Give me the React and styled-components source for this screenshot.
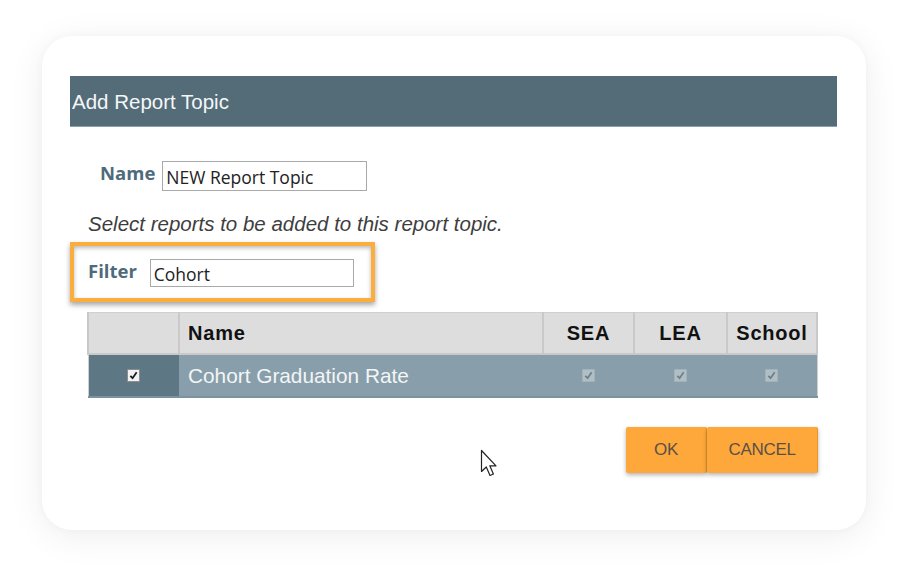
import React from 'react'
import styled, { createGlobalStyle } from 'styled-components'

const GlobalStyle = createGlobalStyle`
    body {
        margin: 0;
        background: #ffffff;
        font-family: "Liberation Sans", Arial, sans-serif;
    }
`

const Page = styled.div`
    width: 908px;
    height: 578px;
    box-sizing: border-box;
    padding: 36px 42px 0 42px;
`

const Card = styled.div`
    position: relative;
    width: 824px;
    height: 494px;
    box-sizing: border-box;
    padding: 40px 29px 0 28px;
    background: #fff;
    border-radius: 30px;
    box-shadow: 0 6px 36px rgba(0, 0, 0, 0.07), 0 0 8px rgba(0, 0, 0, 0.03);
`

const TitleBar = styled.div`
    height: 51px;
    display: flex;
    align-items: center;
    padding: 2px 0 0 2px;
    background: #546b78;
    border-bottom: 1px solid #8aa0ab;
    box-sizing: border-box;
    color: #f4f7f8;
    font-size: 20.5px;
    letter-spacing: 0;
`

const Row = styled.div`
    display: flex;
    align-items: flex-start;
    gap: ${p => p.$gap || 7}px;
    margin-top: ${p => p.$top || 0}px;
    padding-left: ${p => p.$left || 0}px;
`

const Label = styled.span`
    font-family: "Open Sans", "Noto Sans", sans-serif;
    font-weight: 700;
    font-size: 18.5px;
    line-height: 24px;
    color: #4f6b7b;
`

const TextInput = styled.input`
    width: ${p => p.$w}px;
    height: ${p => p.$h}px;
    box-sizing: border-box;
    border: 1px solid #a9a9a9;
    padding: 1px 3px 0;
    font-family: "Open Sans", "Noto Sans", sans-serif;
    font-size: 17.5px;
    color: #222;
    outline: none;
    background: #fff;
`

const Hint = styled.p`
    margin: 22px 0 0 18px;
    font-style: italic;
    font-size: 20.5px;
    line-height: 22px;
    color: #3e3e3e;
`

const FilterBox = styled.div`
    width: 305px;
    height: 60px;
    box-sizing: border-box;
    margin-top: 7px;
    border: 4px solid #fbad3d;
    box-shadow: 0 3px 5px rgba(0, 0, 0, 0.35), inset 0 2px 4px rgba(0, 0, 0, 0.28);
    padding: 13px 0 0 14px;
`

const Table = styled.table`
    margin: 10px 0 0 17px;
    width: 731px;
    border-collapse: collapse;
    border: 1px solid #d0d0d0;
    table-layout: fixed;
`

const Th = styled.th`
    width: ${p => p.$w}px;
    height: 40px;
    padding: 0 0 0 ${p => (p.$align === 'left' ? 8 : 0)}px;
    background: #dddddd;
    border: 2px solid #c9c9c9;
    border-top: 1px solid #d0d0d0;
    text-align: ${p => p.$align || 'center'};
    font-size: 20px;
    font-weight: 700;
    letter-spacing: 0.8px;
    color: #111;
`

const Td = styled.td`
    height: 41px;
    padding: 0 0 0 ${p => (p.$align === 'left' ? 9 : 0)}px;
    background: ${p => (p.$dark ? '#5d7785' : '#889fab')};
    border-bottom: 2px solid #7b93a0;
    text-align: ${p => p.$align || 'center'};
    font-size: 20.8px;
    color: #f3f5f6;
`

const Check = styled.span`
    display: inline-flex;
    align-items: center;
    justify-content: center;
    width: 13px;
    height: 13px;
    box-sizing: border-box;
    border: 1px solid ${p => (p.$disabled ? '#a3b3bb' : '#8e8e8e')};
    background: ${p => (p.$disabled ? '#b0bec5' : '#f2f2f2')};
    border-radius: 1px;
    vertical-align: middle;
    margin-top: -4px;
`

const Buttons = styled.div`
    display: flex;
    justify-content: flex-end;
    margin: 29px 19px 0 0;
`

const Button = styled.button`
    width: ${p => p.$w}px;
    height: 46px;
    border: none;
    border-right: 1px solid #e8962c;
    border-radius: 2px;
    background: #fea83b;
    box-shadow: 0 2px 4px rgba(0, 0, 0, 0.3);
    font-family: "Liberation Sans", Arial, sans-serif;
    font-size: 17px;
    color: #5a5048;
    text-transform: uppercase;
    padding: 0;
    letter-spacing: -0.3px;
`

const Cursor = styled.svg`
    position: absolute;
    left: 438px;
    top: 413px;
`

const CheckMark = ({ disabled }) => (
    <Check $disabled={disabled}>
        <svg width="9" height="9" viewBox="0 0 10 10">
            <path d="M1.5 5.5 L4 8 L8.5 1.5" fill="none" stroke={disabled ? '#6f7f88' : '#1a1a1a'} strokeWidth="2" />
        </svg>
    </Check>
)

const App = () => {
    return (
        <>
            <GlobalStyle />
            <Page>
                <Card>
                    <TitleBar>Add Report Topic</TitleBar>

                    <Row $top={34} $left={30}>
                        <Label>Name</Label>
                        <TextInput $w={205} $h={30} defaultValue="NEW Report Topic" />
                    </Row>

                    <Hint>Select reports to be added to this report topic.</Hint>

                    <FilterBox>
                        <Row $gap={13}>
                            <Label>Filter</Label>
                            <TextInput $w={204} $h={28} defaultValue="Cohort" />
                        </Row>
                    </FilterBox>

                    <Table>
                        <thead>
                            <tr>
                                <Th $w={89}></Th>
                                <Th $align="left">Name</Th>
                                <Th $w={89}>SEA</Th>
                                <Th $w={91}>LEA</Th>
                                <Th $w={88}>School</Th>
                            </tr>
                        </thead>
                        <tbody>
                            <tr>
                                <Td $dark><CheckMark /></Td>
                                <Td $align="left">Cohort Graduation Rate</Td>
                                <Td><CheckMark disabled /></Td>
                                <Td><CheckMark disabled /></Td>
                                <Td><CheckMark disabled /></Td>
                            </tr>
                        </tbody>
                    </Table>

                    <Buttons>
                        <Button $w={81}>OK</Button>
                        <Button $w={111}>Cancel</Button>
                    </Buttons>

                    <Cursor width="20" height="30" viewBox="0 0 20 30">
                        <path d="M1.5 1.5 L1.5 22.5 L6.3 18 L10 26.5 L13.4 25 L9.8 16.8 L16 16.8 Z" fill="#fff" stroke="#222" strokeWidth="1.2" strokeLinejoin="round" />
                    </Cursor>
                </Card>
            </Page>
        </>
    )
}

export default App
